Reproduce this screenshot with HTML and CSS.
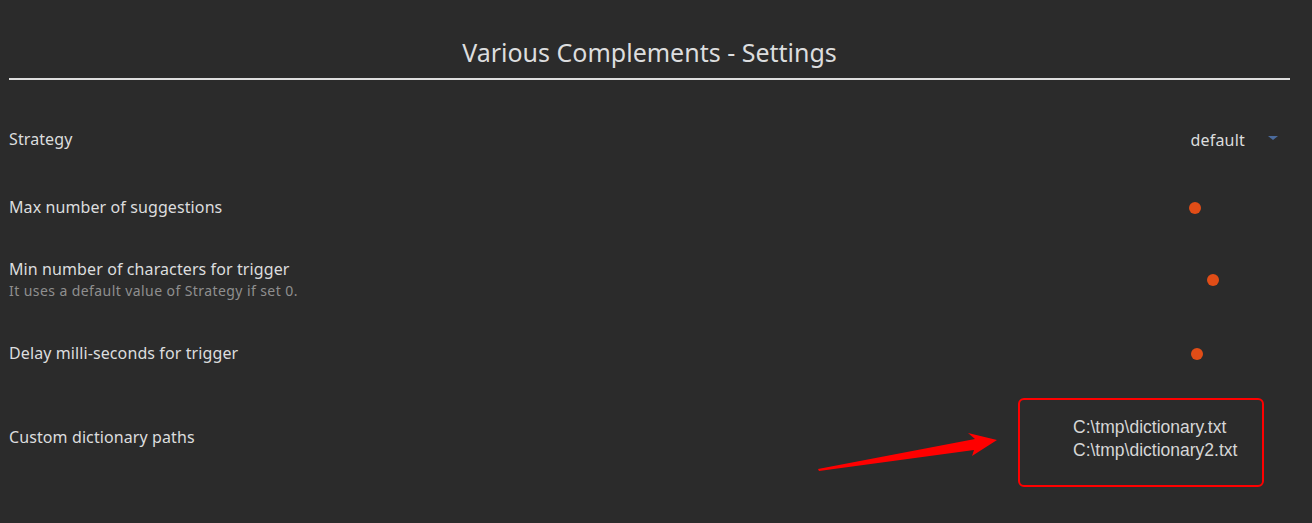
FILE: index.html
```html
<!DOCTYPE html>
<html>
<head>
<meta charset="utf-8">
<link rel="stylesheet" href="styles.css">
</head>
<body>
<div class="page">
  <h2 class="title">Various Complements - Settings</h2>
  <div class="settings">
    <div class="item item-strategy">
      <div class="info"><div class="name">Strategy</div></div>
      <div class="control">
        <div class="dropdown"><span class="dd-value">default</span><span class="dd-arrow"></span></div>
      </div>
    </div>
    <div class="item item-max">
      <div class="info"><div class="name">Max number of suggestions</div></div>
      <div class="control">
        <div class="slider"><span class="thumb" style="left: 6px"></span></div>
      </div>
    </div>
    <div class="item item-min">
      <div class="info">
        <div class="name">Min number of characters for trigger</div>
        <div class="desc">It uses a default value of Strategy if set 0.</div>
      </div>
      <div class="control">
        <div class="slider"><span class="thumb" style="left: 24px"></span></div>
      </div>
    </div>
    <div class="item item-delay">
      <div class="info"><div class="name">Delay milli-seconds for trigger</div></div>
      <div class="control">
        <div class="slider"><span class="thumb" style="left: 8px"></span></div>
      </div>
    </div>
    <div class="item item-custom">
      <div class="info"><div class="name">Custom dictionary paths</div></div>
      <div class="control">
        <div class="textarea">
          <div>C:\tmp\dictionary.txt</div>
          <div>C:\tmp\dictionary2.txt</div>
        </div>
      </div>
      <svg class="arrow" width="190" height="50" viewBox="0 0 190 50">
        <polygon points="8,40 165,10 158,4 187,11 162,27 164,21 9,42" fill="#ff0000"/>
      </svg>
    </div>
  </div>
</div>
</body>
</html>
```

FILE: styles.css
```css
html, body {
  margin: 0;
  padding: 0;
  background: #2b2b2b;
}
body {
  font-family: "Noto Sans", "DejaVu Sans", sans-serif;
  color: #dcddde;
  width: 1312px;
  height: 523px;
  overflow: hidden;
}
.page {
  padding: 0 22px 0 9px;
}
.title {
  margin: 0;
  height: 80px;
  box-sizing: border-box;
  padding-top: 34px;
  font-size: 25px;
  line-height: 36px;
  font-weight: 400;
  text-align: center;
  border-bottom: 2px solid #dedede;
}
.settings {
  padding-top: 25px;
}
.item {
  display: flex;
  align-items: center;
  position: relative;
}
.item-strategy { height: 68px; }
.item-max { height: 68px; }
.item-min { height: 76px; }
.item-delay { height: 72px; }
.item-custom { height: 106px; }
.info { flex: 1; }
.name {
  font-size: 16px;
  line-height: 22px;
  letter-spacing: 0.1px;
}
.desc {
  font-size: 14px;
  line-height: 20px;
  letter-spacing: 0.42px;
  color: #8f8f8f;
  margin-top: 1px;
}
.control {
  display: flex;
  align-items: center;
  justify-content: flex-end;
}
.dropdown {
  display: flex;
  align-items: center;
  padding-right: 12px;
}
.dd-value {
  font-size: 16px;
  line-height: 22px;
  margin-right: 23px;
  margin-top: 2px;
  letter-spacing: 0.2px;
}
.dd-arrow {
  width: 0;
  height: 0;
  border-left: 5px solid transparent;
  border-right: 5px solid transparent;
  border-top: 4px solid #4b6b9d;
  margin-top: -3px;
}
.slider {
  position: relative;
  width: 101px;
  height: 12px;
  margin-top: 2px;
}
.thumb {
  position: absolute;
  top: 0;
  width: 12px;
  height: 12px;
  margin-left: -6px;
  border-radius: 50%;
  background: #e14d17;
}
.item-custom .name { margin-top: -10px; }
.textarea {
  width: 246px;
  height: 89px;
  box-sizing: border-box;
  border: 2px solid #ff0000;
  border-radius: 6px;
  margin-right: 26px;
  padding: 16px 0 0 53px;
  font-family: "Liberation Sans", Arial, sans-serif;
  font-size: 17.5px;
  line-height: 23px;
  color: #d6d6d6;
}
.arrow {
  position: absolute;
  left: 801px;
  top: 40px;
}
```
